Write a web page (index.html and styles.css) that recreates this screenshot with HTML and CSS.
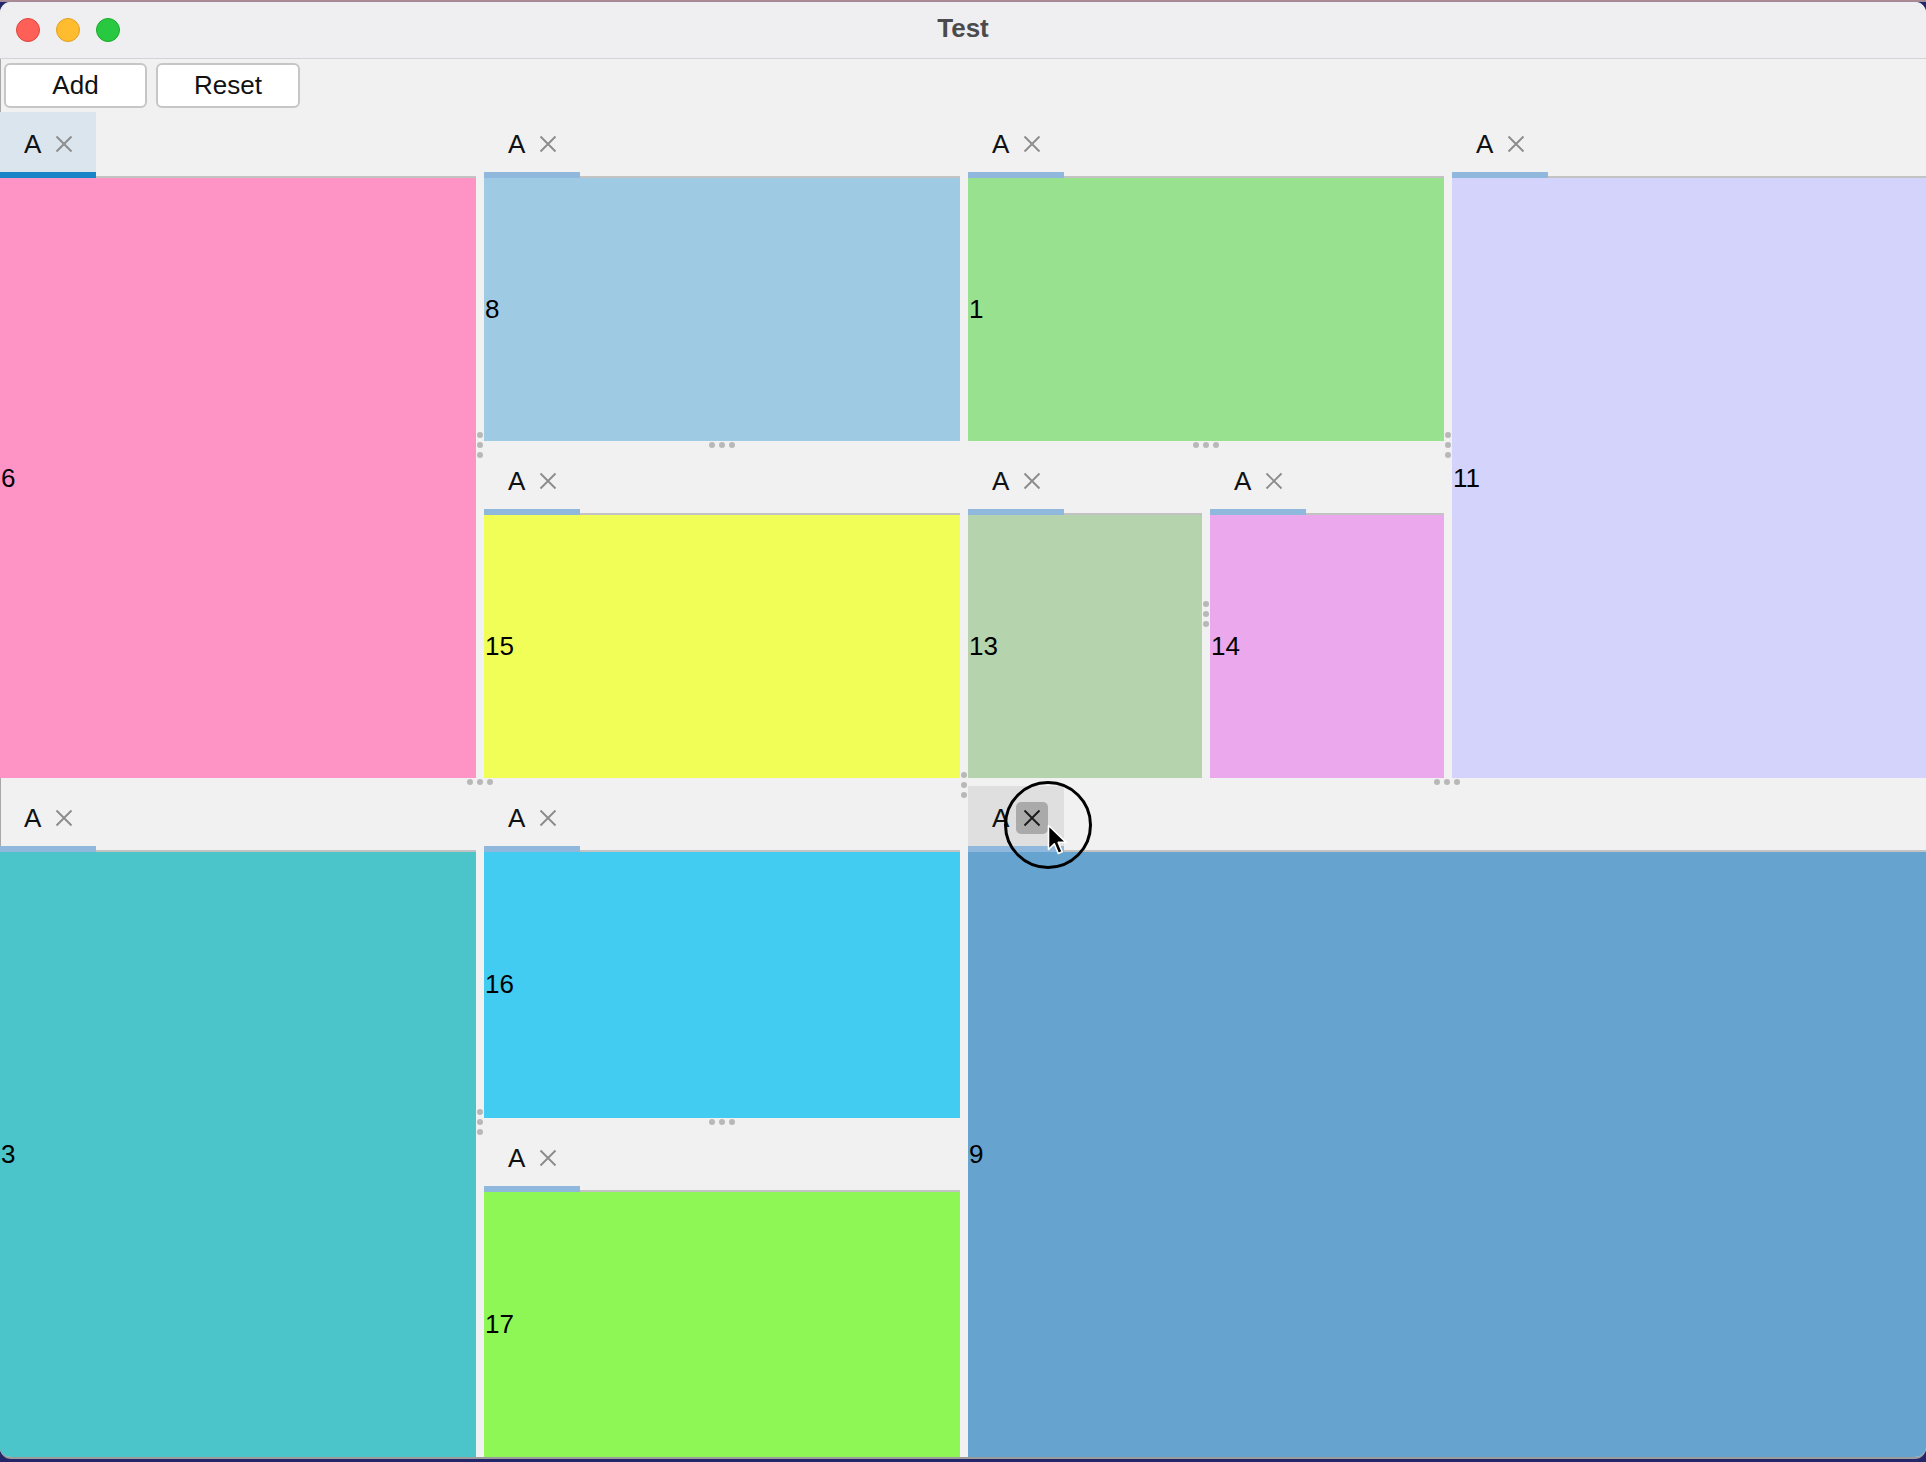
FILE: index.html
```html
<!DOCTYPE html>
<html>
<head>
<meta charset="utf-8">
<title>Test</title>
<link rel="stylesheet" href="styles.css">
</head>
<body>
<div class="window">
  <div class="titlebar">
    <div class="lights">
      <span class="light light-red"></span>
      <span class="light light-yellow"></span>
      <span class="light light-green"></span>
    </div>
    <div class="title">Test</div>
    <div></div>
  </div>
  <div class="toolbar">
    <button class="btn btn-add">Add</button>
    <button class="btn btn-reset">Reset</button>
  </div>
  <div class="dock split-h">
    <!-- left group -->
    <div class="split-v group-left">
      <div class="split-h row-top">
        <div class="pane">
          <div class="tabbar"><div class="tab tab-active"><span class="tab-label">A</span><span class="tab-close"><svg width="18" height="18" viewBox="0 0 18 18"><path d="M1.5 1.5L16.5 16.5M16.5 1.5L1.5 16.5"/></svg></span></div></div>
          <div class="content c6">6</div>
        </div>
        <div class="handle-v"><span class="dot"></span><span class="dot"></span><span class="dot"></span></div>
        <div class="split-v grow">
          <div class="pane">
            <div class="tabbar"><div class="tab"><span class="tab-label">A</span><span class="tab-close"><svg width="18" height="18" viewBox="0 0 18 18"><path d="M1.5 1.5L16.5 16.5M16.5 1.5L1.5 16.5"/></svg></span></div></div>
            <div class="content c8">8</div>
          </div>
          <div class="handle-h"><span class="dot"></span><span class="dot"></span><span class="dot"></span></div>
          <div class="pane">
            <div class="tabbar"><div class="tab"><span class="tab-label">A</span><span class="tab-close"><svg width="18" height="18" viewBox="0 0 18 18"><path d="M1.5 1.5L16.5 16.5M16.5 1.5L1.5 16.5"/></svg></span></div></div>
            <div class="content c15">15</div>
          </div>
        </div>
      </div>
      <div class="handle-h"><span class="dot"></span><span class="dot"></span><span class="dot"></span></div>
      <div class="split-h row-bottom">
        <div class="pane">
          <div class="tabbar"><div class="tab"><span class="tab-label">A</span><span class="tab-close"><svg width="18" height="18" viewBox="0 0 18 18"><path d="M1.5 1.5L16.5 16.5M16.5 1.5L1.5 16.5"/></svg></span></div></div>
          <div class="content c3">3</div>
        </div>
        <div class="handle-v"><span class="dot"></span><span class="dot"></span><span class="dot"></span></div>
        <div class="split-v grow">
          <div class="pane">
            <div class="tabbar"><div class="tab"><span class="tab-label">A</span><span class="tab-close"><svg width="18" height="18" viewBox="0 0 18 18"><path d="M1.5 1.5L16.5 16.5M16.5 1.5L1.5 16.5"/></svg></span></div></div>
            <div class="content c16">16</div>
          </div>
          <div class="handle-h"><span class="dot"></span><span class="dot"></span><span class="dot"></span></div>
          <div class="pane">
            <div class="tabbar"><div class="tab"><span class="tab-label">A</span><span class="tab-close"><svg width="18" height="18" viewBox="0 0 18 18"><path d="M1.5 1.5L16.5 16.5M16.5 1.5L1.5 16.5"/></svg></span></div></div>
            <div class="content c17">17</div>
          </div>
        </div>
      </div>
    </div>
    <div class="handle-v"><span class="dot"></span><span class="dot"></span><span class="dot"></span></div>
    <!-- right group -->
    <div class="split-v group-right">
      <div class="split-h row-top">
        <div class="split-v col-3">
          <div class="pane">
            <div class="tabbar"><div class="tab"><span class="tab-label">A</span><span class="tab-close"><svg width="18" height="18" viewBox="0 0 18 18"><path d="M1.5 1.5L16.5 16.5M16.5 1.5L1.5 16.5"/></svg></span></div></div>
            <div class="content c1">1</div>
          </div>
          <div class="handle-h"><span class="dot"></span><span class="dot"></span><span class="dot"></span></div>
          <div class="split-h grow">
            <div class="pane">
              <div class="tabbar"><div class="tab"><span class="tab-label">A</span><span class="tab-close"><svg width="18" height="18" viewBox="0 0 18 18"><path d="M1.5 1.5L16.5 16.5M16.5 1.5L1.5 16.5"/></svg></span></div></div>
              <div class="content c13">13</div>
            </div>
            <div class="handle-v"><span class="dot"></span><span class="dot"></span><span class="dot"></span></div>
            <div class="pane">
              <div class="tabbar"><div class="tab"><span class="tab-label">A</span><span class="tab-close"><svg width="18" height="18" viewBox="0 0 18 18"><path d="M1.5 1.5L16.5 16.5M16.5 1.5L1.5 16.5"/></svg></span></div></div>
              <div class="content c14">14</div>
            </div>
          </div>
        </div>
        <div class="handle-v"><span class="dot"></span><span class="dot"></span><span class="dot"></span></div>
        <div class="pane col-4">
          <div class="tabbar"><div class="tab"><span class="tab-label">A</span><span class="tab-close"><svg width="18" height="18" viewBox="0 0 18 18"><path d="M1.5 1.5L16.5 16.5M16.5 1.5L1.5 16.5"/></svg></span></div></div>
          <div class="content c11">11</div>
        </div>
      </div>
      <div class="handle-h"><span class="dot"></span><span class="dot"></span><span class="dot"></span></div>
      <div class="pane row-bottom">
        <div class="tabbar"><div class="tab tab-hover"><span class="tab-label">A</span><span class="tab-close tab-close-hover"><svg width="18" height="18" viewBox="0 0 18 18"><path d="M1.5 1.5L16.5 16.5M16.5 1.5L1.5 16.5"/></svg></span></div></div>
        <div class="content c9">9</div>
      </div>
    </div>
  </div>
  <div class="click-ring"></div>
  <svg class="cursor" width="22" height="34" viewBox="0 0 22 34"><path d="M1.5 1.5V25.5L7.3 19.8L11.3 29.5L15.2 27.8L11.2 18.4H19.2Z" fill="#000" stroke="#fff" stroke-width="1.6" stroke-linejoin="round"/></svg>
</div>
</body>
</html>
```

FILE: styles.css
```css
html, body {
  margin: 0;
  padding: 0;
}
body {
  width: 1926px;
  height: 1462px;
  overflow: hidden;
  background: linear-gradient(to bottom, #b48c86 0, #9a86a6 2px, #23276a 2px);
  font-family: "Liberation Sans", Arial, sans-serif;
}
.window {
  position: relative;
  margin-top: 2px;
  width: 1926px;
  height: 1455px;
  border-bottom: 2px solid #9c9c9c;
  border-radius: 11px;
  overflow: hidden;
  background: #f1f1f1;
  display: flex;
  flex-direction: column;
  box-shadow: inset 1px 0 0 #a8a8a8;
}
.titlebar {
  height: 56px;
  flex: none;
  background: #efeff1;
  border-bottom: 1px solid #d3d3d5;
  display: grid;
  grid-template-columns: 1fr auto 1fr;
  align-items: center;
}
.lights {
  display: flex;
  gap: 16px;
  padding-left: 16px;
}
.light {
  width: 24px;
  height: 24px;
  border-radius: 50%;
  box-sizing: border-box;
}
.light-red { background: #fe5f57; border: 1px solid #e0443e; }
.light-yellow { background: #febc2e; border: 1px solid #dea123; }
.light-green { background: #28c840; border: 1px solid #1aab29; }
.title {
  font-weight: bold;
  font-size: 26px;
  color: #4b4b4d;
  margin-top: -3px;
}
.toolbar {
  height: 53px;
  flex: none;
  box-sizing: border-box;
  padding: 4px 0 0 4px;
  display: flex;
  gap: 9px;
  align-items: flex-start;
}
.btn {
  height: 45px;
  box-sizing: border-box;
  background: #ffffff;
  border: 2px solid #c6c6c6;
  border-radius: 6px;
  font-family: "Liberation Sans", Arial, sans-serif;
  font-size: 26px;
  color: #111;
  padding: 0;
  margin: 0;
}
.btn-add { width: 143px; }
.btn-reset { width: 144px; }

.dock {
  flex: 1 1 0;
  min-height: 0;
}
.split-h {
  display: flex;
  flex-direction: row;
}
.split-v {
  display: flex;
  flex-direction: column;
}
.grow {
  flex: 1 1 0;
  min-width: 0;
  min-height: 0;
}
.group-left { flex: 960 1 0; min-width: 0; }
.group-right { flex: 958 1 0; min-width: 0; }
.row-top { flex: 666 1 0; min-height: 0; }
.row-bottom { flex: 671 1 0; min-height: 0; }
.col-3 { flex: 476 1 0; min-width: 0; }
.pane.col-4 { flex: 474 1 0; }
.pane {
  flex: 1 1 0;
  min-width: 0;
  min-height: 0;
  display: flex;
  flex-direction: column;
}
.pane.row-bottom { flex: 671 1 0; }
.handle-v {
  width: 8px;
  flex: none;
  display: flex;
  flex-direction: column;
  align-items: center;
  justify-content: center;
  gap: 4px;
}
.handle-h {
  height: 8px;
  flex: none;
  display: flex;
  flex-direction: row;
  align-items: center;
  justify-content: center;
  gap: 4px;
}
.dot {
  width: 6px;
  height: 6px;
  border-radius: 50%;
  background: #b8b8b8;
}
.tabbar {
  height: 66px;
  flex: none;
  display: flex;
  box-shadow: inset 0 -2px 0 #c3c3c3;
}
.tab {
  width: 96px;
  box-sizing: border-box;
  border-bottom: 6px solid #8fb8dc;
  display: flex;
  align-items: center;
  padding: 4px 0 0 24px;
  gap: 7px;
}
.tab-active {
  background: #dbe5ee;
  border-bottom-color: #1a84c8;
}
.tab-hover {
  background: #dfdfdf;
}
.tab-label {
  font-size: 26px;
  color: #111;
  line-height: 30px;
}
.tab-close {
  width: 32px;
  height: 32px;
  border-radius: 5px;
  display: flex;
  align-items: center;
  justify-content: center;
}
.tab-close svg path {
  stroke: #8c8c8c;
  stroke-width: 1.9;
  fill: none;
}
.tab-close-hover {
  background: #aaaaaa;
}
.tab-close-hover svg path {
  stroke: #1a1a1a;
}
.content {
  flex: 1 1 0;
  min-height: 0;
  display: flex;
  align-items: center;
  padding-left: 1px;
  font-size: 26px;
  color: #000;
}
.c6 { background: #fe94c6; }
.c8 { background: #9ecae4; }
.c15 { background: #f2fe58; }
.c1 { background: #98e28f; }
.c13 { background: #b5d4ae; }
.c14 { background: #eba8ec; }
.c11 { background: #d4d3fb; }
.c3 { background: #4bc5c9; }
.c16 { background: #43ccf2; }
.c17 { background: #8ff755; }
.c9 { background: #66a4cf; }

.click-ring {
  position: absolute;
  left: 1004px;
  top: 779px;
  width: 88px;
  height: 88px;
  box-sizing: border-box;
  border: 3px solid #000;
  border-radius: 50%;
}
.cursor {
  position: absolute;
  left: 1047px;
  top: 822px;
}
```
